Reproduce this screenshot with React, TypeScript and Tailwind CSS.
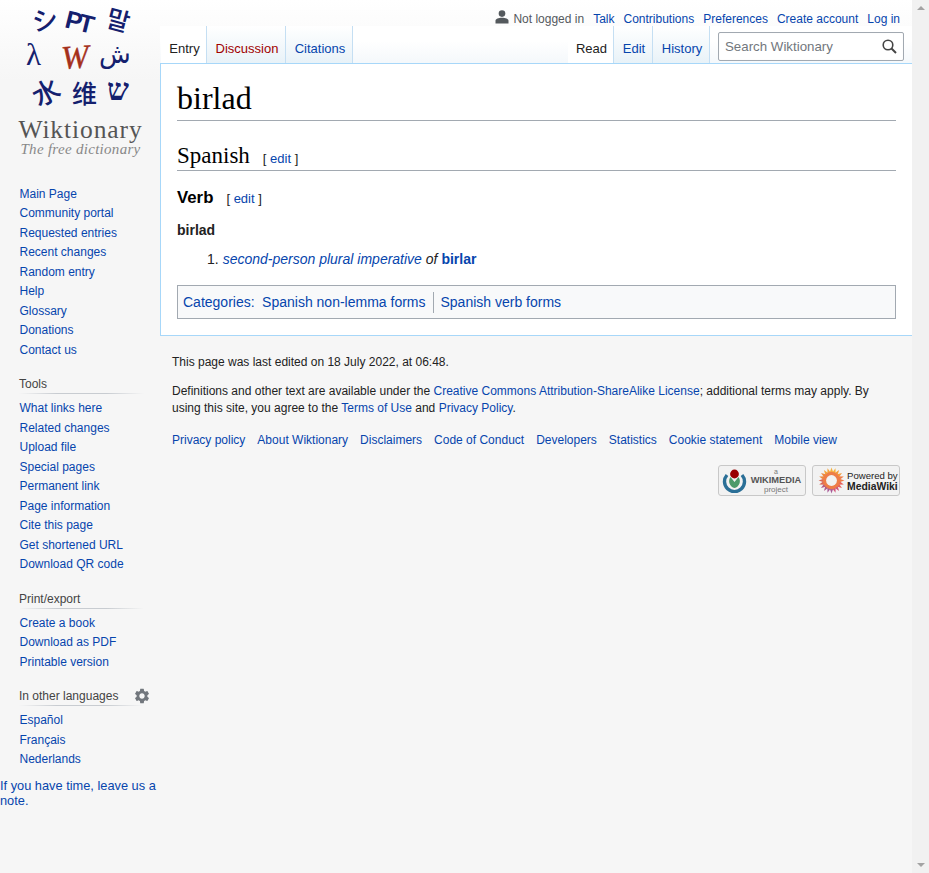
import React from "react";
import { MdSettings } from "react-icons/md";

const sections = [
  {
    title: "",
    items: ["Main Page", "Community portal", "Requested entries", "Recent changes", "Random entry", "Help", "Glossary", "Donations", "Contact us"],
  },
  {
    title: "Tools",
    items: ["What links here", "Related changes", "Upload file", "Special pages", "Permanent link", "Page information", "Cite this page", "Get shortened URL", "Download QR code"],
  },
  { title: "Print/export", items: ["Create a book", "Download as PDF", "Printable version"] },
  { title: "In other languages", items: ["Español", "Français", "Nederlands"] },
];

const footerLinks = ["Privacy policy", "About Wiktionary", "Disclaimers", "Code of Conduct", "Developers", "Statistics", "Cookie statement", "Mobile view"];

const Logo = () => (
  <svg width="160" height="160" viewBox="0 0 160 160" className="block">
    <g fill="#14206e" fontFamily="'Noto Sans CJK JP', sans-serif">
      <text x="32" y="30" fontSize="26" fontWeight="500" transform="rotate(-8 44 20)">シ</text>
      <text x="66" y="31" fontSize="25" fontWeight="700" letterSpacing="-3" fontFamily="'Liberation Sans', sans-serif" transform="rotate(14 81 20)">PT</text>
      <text x="107" y="30" fontSize="25" fontWeight="500" fontFamily="'Noto Sans CJK KR', sans-serif" transform="rotate(15 120 20)">말</text>
      <text x="26" y="65" fontSize="31" fontWeight="400" fontFamily="'Liberation Serif', serif">λ</text>
      <text x="99" y="63" fontSize="26" fontFamily="'DejaVu Sans', sans-serif">ش</text>
      <text x="33" y="102" fontSize="27" fontWeight="500" transform="rotate(-28 47 93)">水</text>
      <text x="72" y="103" fontSize="25" fontWeight="500" fontFamily="'Noto Sans CJK SC', sans-serif">维</text>
      <text x="107" y="100" fontSize="31" fontWeight="700" fontFamily="'Liberation Serif', serif">ש</text>
    </g>
    <text x="61" y="68" fontSize="33" fontStyle="italic" fill="#a5301c" stroke="#a5301c" strokeWidth="0.4" fontFamily="'Liberation Serif', serif" transform="rotate(-4 75 55)">W</text>
    <text x="80.5" y="138" textAnchor="middle" fontSize="25.5" fill="#555" fontFamily="'Liberation Serif', serif" letterSpacing="0.9">Wiktionary</text>
    <text x="80.5" y="154" textAnchor="middle" fontSize="15" fontStyle="italic" fill="#888" fontFamily="'Liberation Serif', serif" letterSpacing="0.3">The free dictionary</text>
  </svg>
);

const Tab = ({ label, active, red, w }: { label: string; active?: boolean; red?: boolean; w: string }) => (
  <div
    className={`${w} h-[37px] flex items-end justify-center pl-[2px] pb-[6px] text-[13px] leading-[16px] border-r border-[#c5dff3] ${
      active ? "bg-white text-[#222]" : red ? "bg-gradient-to-b from-white to-[#e8f2f8] text-[#a00000]" : "bg-gradient-to-b from-white to-[#e8f2f8] text-[#0645ad]"
    }`}
  >
    {label}
  </div>
);

const WikimediaBadge = () => (
  <div className="w-[88px] h-[31px] rounded-[3px] border border-[#c8c8c8] bg-[#f2f2f2] flex items-center pl-[3px] gap-[1px]">
    <svg width="25" height="25" viewBox="0 0 25 25" className="shrink-0">
      <path d="M5 7 A10 10 0 1 0 20 7" fill="none" stroke="#2a6f97" strokeWidth="3.4" />
      <path d="M8.5 9 L12.5 14 L16.5 9 A7 7 0 0 1 12.5 20 A7 7 0 0 1 8.5 9 Z" fill="#4c9a6a" />
      <circle cx="12.5" cy="6" r="4.4" fill="#990000" />
    </svg>
    <div className="flex flex-col items-center w-[56px] text-[#777] whitespace-nowrap">
      <span className="text-[7px] leading-[7px]">a</span>
      <span className="text-[9.3px] leading-[10px] font-bold text-[#555]">WIKIMEDIA</span>
      <span className="text-[8px] leading-[9px]">project</span>
    </div>
  </div>
);

const MediaWikiBadge = () => {
  const petals = Array.from({ length: 20 }, (_, i) => (i * 360) / 20);
  const colors = ["#f5b13c", "#f29a3a", "#ee7d48", "#e8605a", "#d2557a", "#a85a98", "#b05a8a", "#d8685a", "#ec8a3f", "#f3a63c"];
  return (
    <div className="w-[88px] h-[31px] rounded-[3px] border border-[#c8c8c8] bg-[#f2f2f2] flex items-center pl-[5px] gap-[2px]">
      <svg width="27" height="27" viewBox="0 0 25 25" className="shrink-0">
        {petals.map((a, i) => (
          <path
            key={a}
            d="M12.5 0.5 L14.6 6.5 L10.4 6.5 Z"
            fill={colors[(i >> 1) % colors.length]}
            transform={`rotate(${a} 12.5 12.5)`}
          />
        ))}
        <circle cx="12.5" cy="12.5" r="8" fill="#ee7d48" />
        <circle cx="12.5" cy="12.5" r="5" fill="#f2f2f2" />
      </svg>
      <div className="flex flex-col text-[#222] whitespace-nowrap">
        <span className="text-[9.6px] leading-[11px]">Powered by</span>
        <span className="text-[10.4px] leading-[11px] font-bold">MediaWiki</span>
      </div>
    </div>
  );
};

const EditLink = () => (
  <span className="font-normal text-[13px] font-['Liberation_Sans',sans-serif] text-[#222] ml-[13px]">
    [ <span className="text-[#0645ad]">edit</span> ]
  </span>
);

export default function App() {
  return (
    <div className="w-[929px] h-[873px] overflow-hidden flex bg-[#f6f6f6] font-['Liberation_Sans',Arial,sans-serif]">
      <div className="w-[912px] h-full flex bg-[linear-gradient(#ffffff_0,#f6f6f6_80px)]">
        <aside className="w-[160px] shrink-0">
          <Logo />
          <div className="pt-[24.5px]">
            {sections.map((s) => (
              <div key={s.title} className="mb-[6px]">
                {s.title && (
                  <div className="relative ml-[19px] w-[125px] h-[17px] mt-[17px] text-[12px] leading-[15px] text-[#444] bg-[linear-gradient(to_right,transparent,#c8ccd1_30%,#c8ccd1_70%,transparent)] bg-no-repeat bg-bottom bg-[length:100%_1px]">
                    {s.title}
                    {s.title === "In other languages" && (
                      <MdSettings className="absolute left-[114px] top-[-2px] text-[#72777d]" size={18} />
                    )}
                  </div>
                )}
                <ul className={`pl-[19.5px] text-[12px] leading-[19.5px] text-[#0645ad] ${s.title ? "pt-[5px]" : ""}`}>
                  {s.items.map((item) => (
                    <li key={item}>{item}</li>
                  ))}
                </ul>
              </div>
            ))}
            <p className="text-[12.8px] leading-[15px] text-[#0645ad] mt-[8px]">If you have time, leave us a note.</p>
          </div>
        </aside>

        <main className="flex-1 min-w-0">
          <div className="h-[26px] pr-[12px] pt-[11px] flex justify-end items-center gap-[9px] text-[12px] leading-[14px] text-[#0645ad]">
            <span className="flex items-center text-[#54595d]">
              <svg width="14" height="14" viewBox="0 0 14 14" className="mr-[4px] mt-[-3px]" fill="#54595d">
                <circle cx="7" cy="3.6" r="3.3" />
                <path d="M0.5 13.5 V10.8 C0.5 8.8 3.5 7.8 7 7.8 C10.5 7.8 13.5 8.8 13.5 10.8 V13.5 Z" />
              </svg>
              Not logged in
            </span>
            <span>Talk</span>
            <span>Contributions</span>
            <span>Preferences</span>
            <span>Create account</span>
            <span>Log in</span>
          </div>

          <div className="h-[37px] flex items-start bg-[linear-gradient(#ffffff_0,#ffffff_40%,#f4f8fb_100%)] border-l border-transparent">
            <Tab label="Entry" active w="w-[46px]" />
            <Tab label="Discussion" red w="w-[79px]" />
            <Tab label="Citations" w="w-[67px]" />
            <div className="flex-1 h-full" />
            <Tab label="Read" active w="w-[46px]" />
            <Tab label="Edit" w="w-[39px]" />
            <Tab label="History" w="w-[57px]" />
            <div className="w-[202px] h-[37px] pl-[8px] pt-[6px] pr-[8px]">
              <div className="h-[29px] w-[186px] rounded-[2px] border border-[#a2a9b1] bg-white flex items-center justify-between pl-[6px] pr-[6px] text-[13.3px] text-[#72777d] shadow-[inset_0_0_1px_rgba(0,0,0,0.1)]">
                <span>Search Wiktionary</span>
                <svg width="15" height="15" viewBox="0 0 15 15" fill="none" stroke="#444" strokeWidth="1.6">
                  <circle cx="6" cy="6" r="4.8" />
                  <path d="M9.5 9.5 L14 14" strokeWidth="2" />
                </svg>
              </div>
            </div>
          </div>

          <section className="h-[273px] bg-white border border-r-0 border-[#a7d7f9] pl-[16px] pr-[16px] text-[14px] text-[#222]">
            <h1 className="h-[57px] pt-[15px] text-[32px] leading-[38px] text-black font-['Liberation_Serif',serif] border-b border-[#a2a9b1]">birlad</h1>
            <h2 className="h-[50px] pt-[21px] text-[23px] leading-[27px] text-black font-['Liberation_Serif',serif] border-b border-[#a2a9b1]">
              Spanish
              <EditLink />
            </h2>
            <h3 className="pt-[17px] text-[16.8px] leading-[20px] font-bold text-black">
              Verb
              <EditLink />
            </h3>
            <p className="mt-[11px] leading-[20px] font-bold">birlad</p>
            <ol className="mt-[9px] ml-[30px] leading-[20px]">
              <li className="flex gap-[4px]">
                <span>1.</span>
                <span>
                  <i className="text-[#0645ad]">second-person plural imperative</i> <i>of</i>{" "}
                  <b className="text-[#0645ad]">birlar</b>
                </span>
              </li>
            </ol>
            <div className="mt-[16px] h-[34px] border border-[#a2a9b1] bg-[#f8f9fa] flex items-center px-[5px] text-[#0645ad]">
              <span>Categories:</span>
              <span className="ml-[7.5px] pr-[7px] border-r border-[#a2a9b1]">Spanish non-lemma forms</span>
              <span className="ml-[7px]">Spanish verb forms</span>
            </div>
          </section>

          <footer className="pl-[12px] pr-[12px] pt-[18px] text-[12px] leading-[17px] text-[#222]">
            <p>This page was last edited on 18 July 2022, at 06:48.</p>
            <p className="mt-[12px]">
              Definitions and other text are available under the{" "}
              <span className="text-[#0645ad]">Creative Commons Attribution-ShareAlike License</span>; additional terms may apply. By using this site, you agree to the{" "}
              <span className="text-[#0645ad]">Terms of Use</span> and <span className="text-[#0645ad]">Privacy Policy</span>.
            </p>
            <div className="mt-[15px] flex gap-[12px] text-[#0645ad]">
              {footerLinks.map((l) => (
                <span key={l}>{l}</span>
              ))}
            </div>
            <div className="mt-[16px] flex justify-end gap-[6px]">
              <WikimediaBadge />
              <MediaWikiBadge />
            </div>
          </footer>
        </main>
      </div>

      <div className="w-[17px] h-full bg-[#f1f1f1] flex flex-col justify-between items-center py-[6px]">
        <div className="w-0 h-0 border-x-[4px] border-x-transparent border-b-[4px] border-b-[#a3a3a3]" />
        <div className="w-0 h-0 border-x-[4px] border-x-transparent border-t-[4px] border-t-[#a3a3a3]" />
      </div>
    </div>
  );
}
